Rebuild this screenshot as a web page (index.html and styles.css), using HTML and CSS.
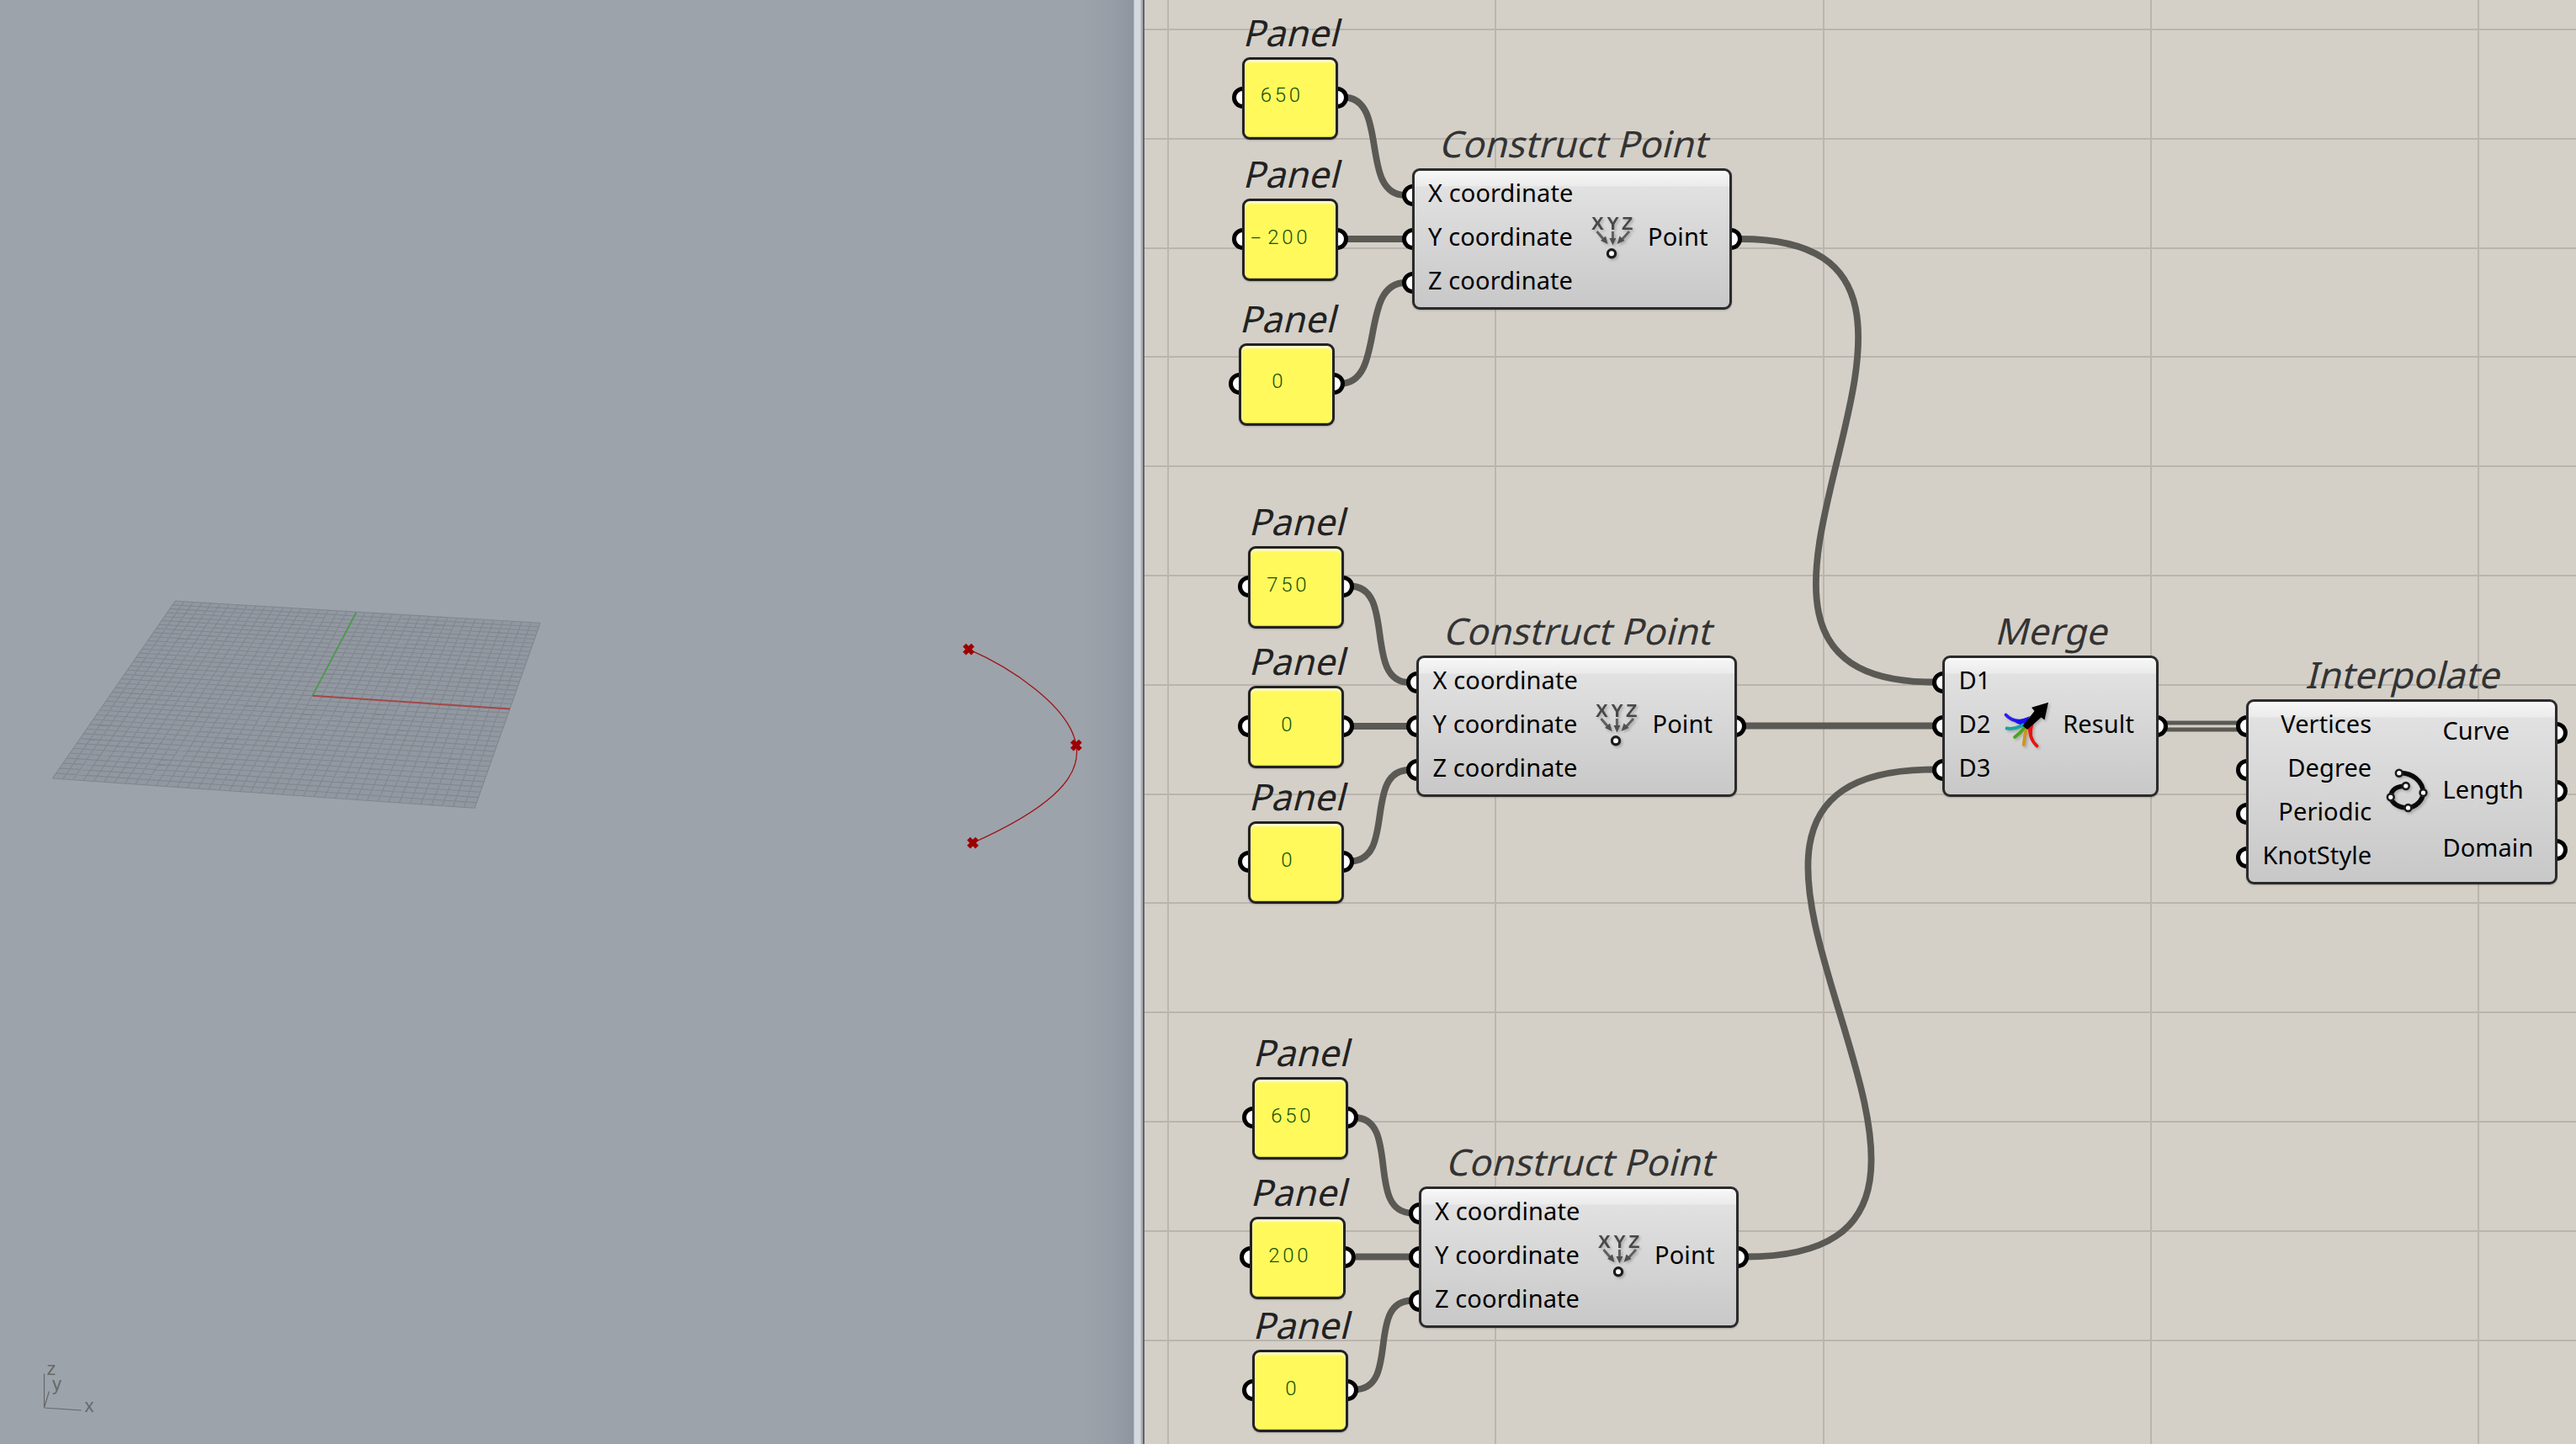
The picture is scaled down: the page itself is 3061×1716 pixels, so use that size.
FILE: index.html
```html
<!DOCTYPE html>
<html lang="en">
<head>
<meta charset="utf-8">
<title>Interpolated curve definition</title>
<link rel="stylesheet" href="styles.css">
</head>
<body>
<svg class="symbols" aria-hidden="true">
  <symbol id="icon-xyz" viewBox="0 0 60 60">
    <g stroke="#606060" stroke-width="3" fill="none"><path d="M13.500 21L22 31M32.400 21V31M52 21L43 31"/></g>
    <g fill="#505050"><path d="M26.500 36l-8.500-4 6-5.500zM32.400 37.500l-4-8.500h8zM37.500 36l3-9.500 6 5.500z"/></g>
    <circle cx="31" cy="47.300" r="4.600" fill="#fff" stroke="#1c1c1c" stroke-width="3.200"/>
  </symbol>
  <symbol id="icon-merge" viewBox="0 0 60 60">
    <g fill="none" stroke-width="3.800" stroke-linecap="round">
      <path d="M4.500 16.500Q14 27 30 22" stroke="#2a1df0"/>
      <path d="M12 22.500Q20 24 33 18L26 29Q18 28 12 22.500" fill="#1a10f0" stroke="none"/>
      <path d="M5.500 32.500Q15 34 25 28.500" stroke="#1aa3a3"/>
      <path d="M15 43Q22 38 26.500 32" stroke="#4aa51c"/>
      <path d="M25.700 52Q26.500 44 28.500 35" stroke="#cf9420"/>
      <path d="M41.500 53.500Q31 44 34 30" stroke="#ee1111"/>
      <path d="M31 31L39 24Q34 35 37 46Q30 38 31 31" fill="#f01010" stroke="none"/>
    </g>
    <path d="M55 1.800L50.500 22.500L46.500 19.500L30 34L24.500 29.500L38.500 12L35 7.700Z" fill="#000"/>
  </symbol>
  <symbol id="icon-curve" viewBox="0 0 60 60">
    <path d="M19.800 7.700C36 7 48 18 48.500 31C48 40 40 48 30.500 49C20 49 11 44 9.800 36.300C10 27 18 23 27.800 23" fill="none" stroke="#0a0a0a" stroke-width="5.600"/>
    <g fill="#fff" stroke="#1c1c1c" stroke-width="2.600">
      <circle cx="19.800" cy="7.700" r="3.900"/><circle cx="48.500" cy="31" r="3.900"/><circle cx="30.500" cy="49" r="3.900"/><circle cx="9.800" cy="36.300" r="3.900"/><circle cx="27.800" cy="23" r="3.900"/>
    </g>
  </symbol>
</svg>

<main class="app">
  <section class="viewport">
    <svg class="scene" viewBox="0 0 1347 1716" width="1347" height="1716">
      <polygon class="plane" points="208.200,714.300 642,740.300 564,960.300 62.400,925"/>
      <path id="plane-lines" class="plane-lines"/>
      <path class="axis-y" d="M371.400 826.700L423.300 728"/>
      <path class="axis-x" d="M371.400 826.700L606 842.500"/>
      <path class="curve" d="M1151 771.700C1198 792 1271 838 1278.800 885.700C1286 927 1240 964 1156 1001.700"/>
      <path class="marks" d="M1146 766.700l10 10m0-10l-10 10M1273.800 880.700l10 10m0-10l-10 10M1151 996.700l10 10m0-10l-10 10"/>
      <path class="gizmo" d="M52.500 1632.500V1673L58.300 1653.500M52.500 1673L96.700 1676"/>
      <g class="gizmo-text"><text x="55.500" y="1633.700">z</text><text x="62" y="1652">y</text><text x="100.500" y="1677.700">x</text></g>
    </svg>
  </section>
  <div class="divider"></div>
  <section class="canvas">
    <svg class="wires" viewBox="1360 0 1701 1716" width="1701" height="1716">
      <path d="M1596 115.500C1652 115.500 1614 232 1670 232"/>
      <path d="M1598 284H1668"/>
      <path d="M1592 456C1648 456 1614 336 1670 336"/>
      <path d="M1604 696.500C1660 696.500 1619 811 1675 811"/>
      <path d="M1606 863H1673"/>
      <path d="M1604 1023.500C1660 1023.500 1619 915 1675 915"/>
      <path d="M1609 1328C1665 1328 1622 1441.500 1678 1441.500"/>
      <path d="M1611 1493.500H1676"/>
      <path d="M1609 1651.500C1665 1651.500 1622 1545.500 1678 1545.500"/>
      <path d="M2068 284C2427 284 1939 810.500 2298 810.500"/>
      <path d="M2072 862.500H2298"/>
      <path d="M2074 1493.500C2475 1493.500 1897 914.500 2298 914.500"/>
      <path class="pair" d="M2574 859H2660M2574 867H2660"/>
    </svg>

    <article class="node panel p1"><h2>Panel</h2><div class="body"><i class="grip in"></i><span>650</span><i class="grip out"></i></div></article>
    <article class="node panel p2"><h2>Panel</h2><div class="body"><i class="grip in"></i><span><b>-</b>200</span><i class="grip out"></i></div></article>
    <article class="node panel p3"><h2>Panel</h2><div class="body"><i class="grip in"></i><span>0</span><i class="grip out"></i></div></article>
    <article class="node panel p4"><h2>Panel</h2><div class="body"><i class="grip in"></i><span>750</span><i class="grip out"></i></div></article>
    <article class="node panel p5"><h2>Panel</h2><div class="body"><i class="grip in"></i><span>0</span><i class="grip out"></i></div></article>
    <article class="node panel p6"><h2>Panel</h2><div class="body"><i class="grip in"></i><span>0</span><i class="grip out"></i></div></article>
    <article class="node panel p7"><h2>Panel</h2><div class="body"><i class="grip in"></i><span>650</span><i class="grip out"></i></div></article>
    <article class="node panel p8"><h2>Panel</h2><div class="body"><i class="grip in"></i><span>200</span><i class="grip out"></i></div></article>
    <article class="node panel p9"><h2>Panel</h2><div class="body"><i class="grip in"></i><span>0</span><i class="grip out"></i></div></article>

    <article class="node comp c1"><h2>Construct Point</h2><div class="body">
      <ul class="inputs"><li><i class="grip in"></i>X coordinate</li><li><i class="grip in"></i>Y coordinate</li><li><i class="grip in"></i>Z coordinate</li></ul>
      <svg class="icon" viewBox="0 0 60 60"><g class="xyz-letters"><text x="14.300" y="18.700">X</text><text x="32.500" y="18.700">Y</text><text x="49.700" y="18.700">Z</text></g><use href="#icon-xyz"/></svg>
      <ul class="outputs"><li>Point<i class="grip out"></i></li></ul></div></article>
    <article class="node comp c2"><h2>Construct Point</h2><div class="body">
      <ul class="inputs"><li><i class="grip in"></i>X coordinate</li><li><i class="grip in"></i>Y coordinate</li><li><i class="grip in"></i>Z coordinate</li></ul>
      <svg class="icon" viewBox="0 0 60 60"><g class="xyz-letters"><text x="14.300" y="18.700">X</text><text x="32.500" y="18.700">Y</text><text x="49.700" y="18.700">Z</text></g><use href="#icon-xyz"/></svg>
      <ul class="outputs"><li>Point<i class="grip out"></i></li></ul></div></article>
    <article class="node comp c3"><h2>Construct Point</h2><div class="body">
      <ul class="inputs"><li><i class="grip in"></i>X coordinate</li><li><i class="grip in"></i>Y coordinate</li><li><i class="grip in"></i>Z coordinate</li></ul>
      <svg class="icon" viewBox="0 0 60 60"><g class="xyz-letters"><text x="14.300" y="18.700">X</text><text x="32.500" y="18.700">Y</text><text x="49.700" y="18.700">Z</text></g><use href="#icon-xyz"/></svg>
      <ul class="outputs"><li>Point<i class="grip out"></i></li></ul></div></article>
    <article class="node comp merge"><h2>Merge</h2><div class="body">
      <ul class="inputs"><li><i class="grip in"></i>D1</li><li><i class="grip in"></i>D2</li><li><i class="grip in"></i>D3</li></ul>
      <svg class="icon" viewBox="0 0 60 60"><use href="#icon-merge"/></svg>
      <ul class="outputs"><li>Result<i class="grip out"></i></li></ul></div></article>
    <article class="node comp interp"><h2>Interpolate</h2><div class="body">
      <ul class="inputs"><li><i class="grip in"></i>Vertices</li><li><i class="grip in"></i>Degree</li><li><i class="grip in"></i>Periodic</li><li><i class="grip in"></i>KnotStyle</li></ul>
      <svg class="icon" viewBox="0 0 60 60"><use href="#icon-curve"/></svg>
      <ul class="outputs"><li>Curve<i class="grip out"></i></li><li>Length<i class="grip out"></i></li><li>Domain<i class="grip out"></i></li></ul></div></article>
  </section>
</main>
<script src="plane.js"></script>
</body>
</html>
```

FILE: styles.css
```css
* { box-sizing: border-box; }
body { margin: 0; overflow: hidden; font-family: "Noto Sans", "Open Sans", sans-serif; }
.symbols { position: absolute; width: 0; height: 0; }
.app { display: flex; width: 3061px; height: 1716px; }

.viewport {
  flex: 0 0 1347px;
  background: linear-gradient(90deg, #9da3ab 1285px, #989ea7 1320px, #8f959f 1347px);
}
.scene { display: block; }
.plane { fill: #9298a1; }
.plane-lines { fill: none; stroke: #81878f; stroke-width: 1.1; }
.axis-y { stroke: #4c9c4c; stroke-width: 1.8; }
.axis-x { stroke: #a34848; stroke-width: 2; }
.curve { fill: none; stroke: #9c1515; stroke-width: 1.3; }
.marks { stroke: #9c0000; stroke-width: 5.400; }
.gizmo { fill: none; stroke: #66696a; stroke-width: 1.200; }
.gizmo-text { font: 22px "Liberation Sans", Arial, sans-serif; fill: #66696a; }

.divider {
  flex: 0 0 13px;
  background: linear-gradient(90deg, #b4bccf 0 1.500px, #d5d8df 1.500px 8px, #c3c6cd 8px 9px, #a9acb3 9px 11.500px, #60646a 11.500px 13px);
}

.canvas {
  position: relative;
  flex: 1;
  overflow: hidden;
  background:
    repeating-linear-gradient(90deg, #bab6ae 0 2px, transparent 2px 389.300px) 27px 0 / 1701px 100% no-repeat,
    repeating-linear-gradient(180deg, #b9b5ad 0 2px, transparent 2px 129.800px) 0 34px / 100% 1716px no-repeat,
    #d4d0c8;
}
.wires { display: block; fill: none; stroke: #5a5954; stroke-width: 7.800; }
.wires .pair { stroke-width: 5; }

/* nodes on the free canvas */
.node { position: absolute; isolation: isolate; }
.node h2 {
  margin: 0;
  height: 60px;
  font-size: 43.500px;
  font-weight: 400;
  line-height: 60px;
  letter-spacing: .15px;
  text-align: center;
  white-space: nowrap;
  color: #333;
  transform: translateX(4.500px) skewX(-14deg);
}
.body {
  position: relative;
  display: flex;
  border: 3px solid #2b2b2b;
  border-radius: 9px;
}
.grip {
  position: absolute;
  z-index: -1;
  top: calc(50% - 13px);
  width: 26px;
  height: 26px;
  border: 5.500px solid #000;
  border-radius: 50%;
  background: #fff;
}
.grip.in { left: -15px; }
.grip.out { right: -15px; }

.panel { width: 114px; }
.panel h2 { color: #222; }
.panel .body {
  height: 98px;
  padding: 0 22px 7px 0;
  align-items: center;
  justify-content: center;
  border-color: #222;
  background: #fff95b;
  box-shadow: inset 0 4px 2px -1px #fffccd, inset 2px 0 2px -1px #fffbb4, inset -2px 0 2px -1px #fffbb4, inset 0 -1px 1px #cfc93a, 0 1px 2px rgba(0, 0, 0, .2);
}
.panel .grip { top: 32px; }
.panel span {
  font: 300 24px Roboto, "Open Sans", sans-serif;
  letter-spacing: 3.700px;
  margin-right: -3.700px;
  color: #12500a;
}
.panel b {
  display: inline-block;
  font-weight: 300;
  letter-spacing: 0;
  width: 17px;
  transform: scaleX(1.800);
  transform-origin: 20% 50%;
}

.comp .body {
  height: 168px;
  justify-content: space-between;
  padding: 3px 0;
  background: linear-gradient(180deg, #fff 0, #f5f5f5 3px, #ebebeb 18px, #e1e1e1 19px, #c8c8c8 100%);
  box-shadow: 0 1px 2px rgba(0, 0, 0, .2);
}
.comp ul {
  display: flex;
  flex-direction: column;
  margin: 0;
  padding: 0;
  list-style: none;
  font-size: 29px;
  letter-spacing: .1px;
  color: #000;
}
.comp li {
  position: relative;
  flex: 1;
  display: flex;
  align-items: center;
  padding-bottom: 6.500px;
  white-space: nowrap;
}
.inputs li { padding-left: 16.500px; }
.outputs li { padding-right: 25.500px; }
.icon { align-self: center; width: 60px; height: 60px; filter: drop-shadow(2px 2px 1.500px rgba(0, 0, 0, .2)); }
.xyz-letters { font: 700 22px "Liberation Sans", Arial, sans-serif; fill: #484848; text-anchor: middle; }
.c1, .c2, .c3 { width: 380.500px; }
.merge { width: 256.500px; }
.interp { width: 370px; }
.interp .body { height: 220px; }
.interp .inputs li { justify-content: flex-end; }
.merge .icon, .interp .icon { position: relative; left: 1px; }

.p1 { left: 115.500px; top: 7.500px; }
.p2 { left: 115.500px; top: 176px; }
.p3 { left: 112px; top: 347.500px; }
.p4 { left: 123px; top: 589px; }
.p5 { left: 123px; top: 755px; }
.p6 { left: 123px; top: 916px; }
.p7 { left: 128px; top: 1220px; }
.p8 { left: 125px; top: 1386px; }
.p9 { left: 128px; top: 1544px; }
.c1 { left: 317.500px; top: 140px; }
.c2 { left: 323px; top: 718.500px; }
.c3 { left: 325.500px; top: 1349.500px; }
.merge { left: 948px; top: 718.500px; }
.interp { left: 1309px; top: 770.500px; }
```

FILE: plane.js
```js
// Construction plane: 40 x 40 cells in perspective
const [a, b, c, d] = [[208.2, 714.3], [642, 740.3], [564, 960.3], [62.4, 925]];
const dx1 = b[0] - c[0], dx2 = d[0] - c[0], sx = a[0] - b[0] + c[0] - d[0];
const dy1 = b[1] - c[1], dy2 = d[1] - c[1], sy = a[1] - b[1] + c[1] - d[1];
const det = dx1 * dy2 - dx2 * dy1;
const g = (sx * dy2 - dx2 * sy) / det;
const h = (dx1 * sy - sx * dy1) / det;
function project(u, v) {
  const w = g * u + h * v + 1;
  const x = ((b[0] - a[0] + g * b[0]) * u + (d[0] - a[0] + h * d[0]) * v + a[0]) / w;
  const y = ((b[1] - a[1] + g * b[1]) * u + (d[1] - a[1] + h * d[1]) * v + a[1]) / w;
  return x.toFixed(1) + " " + y.toFixed(1);
}
let path = "";
for (let i = 0; i <= 40; i++) {
  const t = i / 40;
  path += `M${project(t, 0)}L${project(t, 1)}M${project(0, t)}L${project(1, t)}`;
}
document.getElementById("plane-lines").setAttribute("d", path);
```
